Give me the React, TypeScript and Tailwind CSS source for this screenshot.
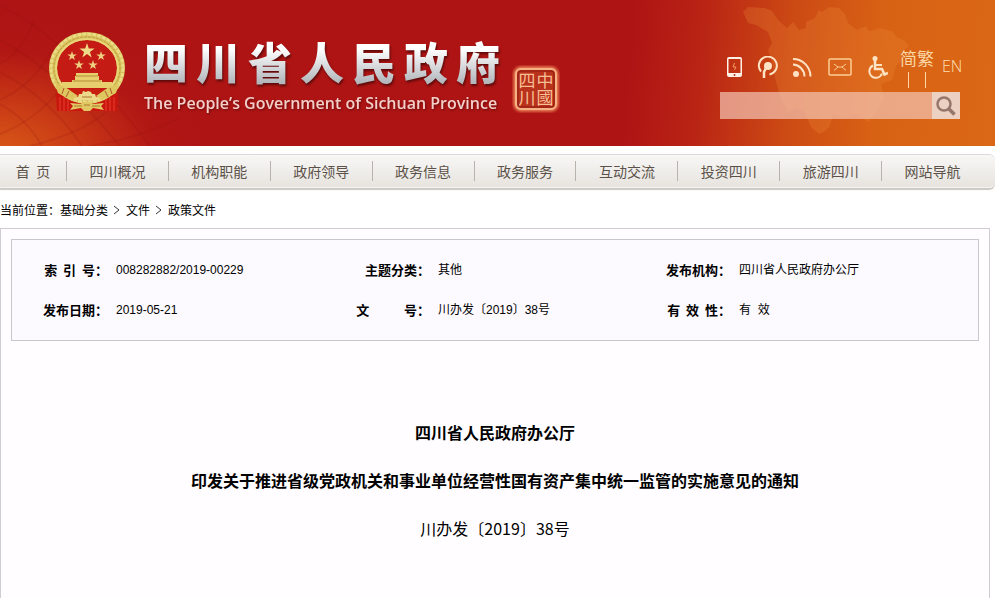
import type { ReactNode } from "react"

const TITLE = "四川省人民政府"

const NAV_ITEMS = [
  "四川概况",
  "机构职能",
  "政府领导",
  "政务信息",
  "政务服务",
  "互动交流",
  "投资四川",
  "旅游四川",
  "网站导航"
]

const CRUMBS = ["基础分类", "文件", "政策文件"]

interface Field {
  label: string
  value: string
}

const FIELDS: Field[] = [
  { label: "索\u00a0\u00a0引\u00a0\u00a0号：", value: "008282882/2019-00229" },
  { label: "主题分类：", value: "其他" },
  { label: "发布机构：", value: "四川省人民政府办公厅" },
  { label: "发布日期：", value: "2019-05-21" },
  { label: "文\u3000\u3000\u00a0\u00a0\u00a0号：", value: "川办发〔2019〕38号" },
  { label: "有\u00a0\u00a0效\u00a0\u00a0性：", value: "有\u00a0\u00a0效" }
]

// Five-pointed star centred on (cx, cy)
function starPoints(cx: number, cy: number, r: number): string {
  return Array.from({ length: 10 }, (_, i) => {
    const radius = i % 2 === 0 ? r : r * 0.38
    const a = (Math.PI / 5) * i - Math.PI / 2
    return `${(cx + radius * Math.cos(a)).toFixed(2)},${(cy + radius * Math.sin(a)).toFixed(2)}`
  }).join(" ")
}

function Emblem() {
  return (
    <svg width="78" height="82" viewBox="0 0 78 82" className="shrink-0" aria-hidden="true">
      {/* Drapes */}
      <path d="M8 62 L9 80 H69 L70 62 L58 66 H20 Z" fill="#c9160f" />
      <path d="M12 66 V80 M16 66 V80 M20 68 V80 M66 66 V80 M62 66 V80 M58 68 V80" stroke="#e8412c" strokeWidth="1" />
      {/* Wheat ring */}
      <ellipse cx="39" cy="37" rx="34" ry="32" fill="#c41c14" stroke="#d6bd58" strokeWidth="8" />
      <ellipse cx="39" cy="37" rx="36" ry="34" fill="none" stroke="#e9dc84" strokeWidth="3" strokeDasharray="4 1" />
      <ellipse cx="39" cy="37" rx="33" ry="31" fill="none" stroke="#b9a040" strokeWidth="1" strokeDasharray="2 2" />
      <ellipse cx="39" cy="37" rx="31" ry="29" fill="none" stroke="#e8d678" strokeWidth="2" />
      {/* Stars */}
      <polygon points={starPoints(39, 20, 8)} fill="#eedb88" />
      <polygon points={starPoints(24, 25, 5)} fill="#eed080" />
      <polygon points={starPoints(53, 25, 5)} fill="#eed080" />
      <polygon points={starPoints(31, 34, 5)} fill="#eed080" />
      <polygon points={starPoints(45, 34, 5)} fill="#eed080" />
      {/* Gate */}
      <path d="M28 42 H50 V45 H28 Z M27 45 H51 V50 H27 Z M24 49 H54 V52 H24 Z M14 51 H64 V57 H14 Z" fill="#e6cf6c" />
      <path d="M28 45 H50 M25 50 H53" stroke="#b48f38" strokeWidth="1" />
      <path d="M15 58 H63 L57 66 H21 Z" fill="#c8200f" />
      <path d="M7 52 L20 58 L30 65 L25 69 L17 66 L10 62 Z M71 52 L58 58 L48 65 L53 69 L61 66 L68 62 Z" fill="#dfc760" />
      <path d="M16 57 L14 63 M21 60 L18 66 M62 57 L64 63 M57 60 L60 66" stroke="#b1562a" strokeWidth="1" />
      {/* Gear and ribbon */}
      <path d="M31 63 L34 63 L35 60 L38 61 L40 60 L43 61 L44 63 L47 63 L48 66 L53 67 L49 69 H29 L25 67 L30 66 Z" fill="#edd98a" />
      <path d="M22 72 L33 73 L35 71 H43 L45 73 L56 72 L53 75 L56 79 L45 77 L42 80 H36 L33 77 L22 79 L25 75 Z" fill="#e2c863" />
      <path d="M26 75 H34 M44 75 H52 M36 74 H42 M34 66 H44" stroke="#a87a2d" strokeWidth="1" />
    </svg>
  )
}

function Seal() {
  return (
    <svg width="48" height="48" viewBox="0 0 48 48" className="shrink-0" role="img" aria-label="中国四川">
      <defs>
        <filter id="glow" x="-20%" y="-20%" width="140%" height="140%">
          <feGaussianBlur stdDeviation="1.5" />
        </filter>
      </defs>
      <rect x="4" y="4" width="40" height="40" rx="5" fill="none" stroke="#f08a5c" strokeWidth="5" filter="url(#glow)" />
      <rect x="4" y="4" width="40" height="40" rx="5" fill="#b8321c" stroke="#f5b083" strokeWidth="2" />
      <rect x="6" y="6" width="36" height="36" rx="3" fill="none" stroke="#8e1b10" strokeWidth="1" />
      <g fill="#f9bf94" fontSize="17" fontFamily="'Noto Sans CJK TC', sans-serif" textAnchor="middle">
        <text x="15" y="22">四</text>
        <text x="15" y="39">川</text>
        <text x="33" y="22">中</text>
        <text x="33" y="39">國</text>
      </g>
    </svg>
  )
}

function HeaderArt() {
  return (
    <>
      <svg className="absolute left-0 top-0 h-full" width="330" viewBox="0 0 330 146" aria-hidden="true">
        <g fill="none" stroke="#8f1410" strokeOpacity="0.16" strokeWidth="2">
          <path d="M0 5 Q70 40 150 146 M0 40 Q60 72 120 146 M0 72 Q50 98 82 146 M0 104 Q28 120 42 146" />
          <path d="M0 134 Q40 118 64 84 M0 100 Q34 84 52 50 M0 64 Q24 50 34 20 M30 146 Q80 134 106 112 M90 146 Q140 138 180 118" />
        </g>
      </svg>
      {/* Province outline */}
      <svg className="absolute right-0 top-0 h-full" width="295" viewBox="0 0 295 146" aria-hidden="true">
        <path
          d="M43 12 L48 7 L65 8 L72 11 L78 20 L87 28 L93 22 L99 30 L106 28 L106 22 L115 18 L119 10 L122 12 L129 7 L139 8 L145 14 L148 23 L157 30 L166 26 L169 31 L181 28 L193 32 L196 37 L204 40 L209 46 L201 52 L204 59 L196 66 L192 80 L181 84 L184 96 L177 112 L168 122 L156 113 L145 119 L133 113 L130 126 L124 132 L119 134 L111 127 L105 112 L97 108 L88 112 L81 98 L76 82 L72 62 L68 50 L72 43 L68 32 L56 25 L48 23 Z"
          fill="#ef8a3a"
          fillOpacity="0.26"
        />
      </svg>
    </>
  )
}

function IconLink({ label, children }: { label: string; children: ReactNode }) {
  return (
    <a href="#" aria-label={label} className="block shrink-0 text-[#fde3c4]">
      {children}
    </a>
  )
}

function Tools() {
  return (
    <div className="flex h-9 items-center gap-3 pl-1">
      <IconLink label="手机版">
        <svg width="20" height="24" viewBox="0 0 20 24">
          <path fillRule="evenodd" fill="#fff1e6" d="M5 1 H16 Q18 1 18 3 V19 Q18 21 16 21 H5 Q3 21 3 19 V3 Q3 1 5 1 Z M4.5 3 V17 H16.5 V3 Z" />
          <path d="M10.5 7 L9 11 H12 L10.5 14" fill="none" stroke="#f39a5c" />
          <circle cx="10.5" cy="19" r="1" fill="#b5301a" />
        </svg>
      </IconLink>
      <IconLink label="微门户">
        <svg width="24" height="24" viewBox="0 0 24 24" fill="none" stroke="currentColor" strokeWidth="2">
          <path d="M5 15.5 A9 9 0 1 1 13.5 18.5" />
          <path d="M8 22 V16 L10 12" strokeWidth="2.5" />
          <circle cx="12" cy="10" r="4" fill="currentColor" stroke="none" />
        </svg>
      </IconLink>
      <IconLink label="订阅">
        <svg width="20" height="24" viewBox="0 0 20 24" fill="none" stroke="currentColor" strokeWidth="2">
          <circle cx="4" cy="18" r="3" fill="currentColor" stroke="none" />
          <path d="M1 8.5 A12 12 0 0 1 12.5 20.5 M1 3 A17.5 17.5 0 0 1 18.5 20.5" />
        </svg>
      </IconLink>
      <IconLink label="邮箱">
        <svg width="32" height="24" viewBox="0 0 32 24" fill="none" stroke="#fbce94">
          <rect x="5" y="3" width="22" height="16" rx="1" strokeWidth="1.5" />
          <path d="M10 8 L14 11 H18 L22 8 M10 14.5 L14 11 M18 11 L22 14.5" />
        </svg>
      </IconLink>
      <IconLink label="无障碍">
        <svg width="20" height="24" viewBox="0 0 20 24" fill="none" stroke="currentColor" strokeWidth="2">
          <circle cx="7" cy="2.5" r="2.5" fill="currentColor" stroke="none" />
          <path d="M7 4 V13 H14 L16.5 18.5 L20 17" strokeWidth="2.5" />
          <path d="M8 9 H14" />
          <path d="M5 9.5 A6.5 6.5 0 1 0 14 17.5" />
        </svg>
      </IconLink>
      <div className="-mr-1 flex text-[17px] leading-5 text-[#fbd7a5]">
        {["简", "繁"].map((ch) => (
          <a key={ch} href="#" className="flex flex-col items-center gap-1">
            <span>{ch}</span>
            <span className="h-4 w-px bg-[#fbd7a5]" />
          </a>
        ))}
      </div>
      <a href="#" className="font-['Open_Sans',sans-serif] pb-1 text-base font-light text-[#fde0b8]">
        EN
      </a>
    </div>
  )
}

function Header() {
  return (
    <header className="relative flex h-[146px] items-start justify-between bg-[radial-gradient(ellipse_210px_150px_at_0%_112%,#dc6018_0%,#cf4216cc_40%,#b81c1455_75%,#b0141400_100%),linear-gradient(95deg,#ae1414_0%,#ae1414_63%,#b92414_70%,#cc4a14_79%,#d86214_88%,#da6816_100%)]">
      <HeaderArt />
      <div className="relative flex pl-12 pt-[31px]">
        <Emblem />
        <div className="ml-[18px]">
          <h1 aria-label={TITLE} className="flex gap-2 text-[44px] font-black leading-[60px] drop-shadow-[1px_2px_1px_#5c0a0a]">
            {TITLE.split("").map((ch) => (
              <span key={ch} className="bg-linear-to-b from-white from-30% to-[#b4b8bd] to-85% bg-clip-text text-transparent">
                {ch}
              </span>
            ))}
          </h1>
          <p className="font-['Open_Sans',sans-serif] text-[16px] font-semibold leading-6 whitespace-nowrap text-[#f3cfca] drop-shadow-[1px_1px_1px_#6c0a0a]">
            The People’s Government of Sichuan Province
          </p>
        </div>
        <div className="ml-3 pt-[34px]">
          <Seal />
        </div>
      </div>
      <div className="relative mr-[35px] w-60 pt-[50px]">
        <Tools />
        <form className="mt-[6px] flex" role="search" onSubmit={(e) => e.preventDefault()}>
          <input
            type="text"
            aria-label="搜索"
            className="h-[27px] min-w-0 flex-1 bg-[#f4c4b4]/70 px-2 text-xs text-black outline-none"
          />
          <button type="submit" aria-label="搜索" className="flex h-[27px] w-7 items-center justify-center bg-[#ecd0c2]">
            <svg width="20" height="20" viewBox="0 0 20 20" fill="none" stroke="#96766b">
              <circle cx="8" cy="8" r="6.5" strokeWidth="2.5" />
              <path d="M13 13 L18.5 18.5" strokeWidth="3.5" />
            </svg>
          </button>
        </form>
      </div>
    </header>
  )
}

function Nav() {
  return (
    <nav className="mt-2 rounded-r-md border-y border-t-[#ddd9dc] border-b-[#f5f3f1] bg-linear-to-b from-[#f8f7f6] to-[#e7e4df] pr-3 shadow-[0_2px_1px_#cdc8c4]">
      <ul className="flex h-8 items-center text-sm text-[#5b5148]">
        <li className="w-[66px] text-center">
          <a href="#">首&nbsp;&nbsp;页</a>
        </li>
        {NAV_ITEMS.map((item) => (
          <li key={item} className="flex h-5 flex-1 items-center justify-center border-l border-[#b9b3ae]">
            <a href="#">{item}</a>
          </li>
        ))}
      </ul>
    </nav>
  )
}

function Breadcrumb() {
  return (
    <div className="flex h-10 items-center pt-1 text-xs text-black">
      <span>当前位置：</span>
      {CRUMBS.map((crumb, i) => (
        <span key={crumb} className="flex items-center">
          {i > 0 && (
            <svg width="18" height="10" viewBox="0 0 18 10" fill="none" stroke="#333" aria-hidden="true">
              <path d="M6 1 L11 5 L6 9" />
            </svg>
          )}
          <a href="#">{crumb}</a>
        </span>
      ))}
    </div>
  )
}

export default function App() {
  return (
    <div className="flex min-h-screen flex-col bg-white font-['Noto_Sans_CJK_SC',sans-serif]">
      <Header />
      <Nav />
      <Breadcrumb />
      <main className="mr-[5px] flex-1 border border-b-0 border-[#cfccd3] bg-[#fffdff] p-[10px]">
        <dl className="grid grid-cols-[322fr_301fr_343fr] gap-y-5 border border-[#c9c7cd] bg-[#fcfaff] py-5 text-xs leading-5 text-black">
          {FIELDS.map((field) => (
            <div key={field.value} className="flex gap-2">
              <dt className="w-24 shrink-0 whitespace-nowrap text-right text-[13px] font-bold">{field.label}</dt>
              <dd className="font-['Liberation_Sans','Noto_Sans_CJK_SC',sans-serif]">{field.value}</dd>
            </div>
          ))}
        </dl>
        <article className="mt-[67px] text-center text-base leading-[48px] text-black">
          <h2 className="font-bold">四川省人民政府办公厅</h2>
          <h2 className="font-bold">印发关于推进省级党政机关和事业单位经营性国有资产集中统一监管的实施意见的通知</h2>
          <p>川办发〔2019〕38号</p>
        </article>
      </main>
    </div>
  )
}
